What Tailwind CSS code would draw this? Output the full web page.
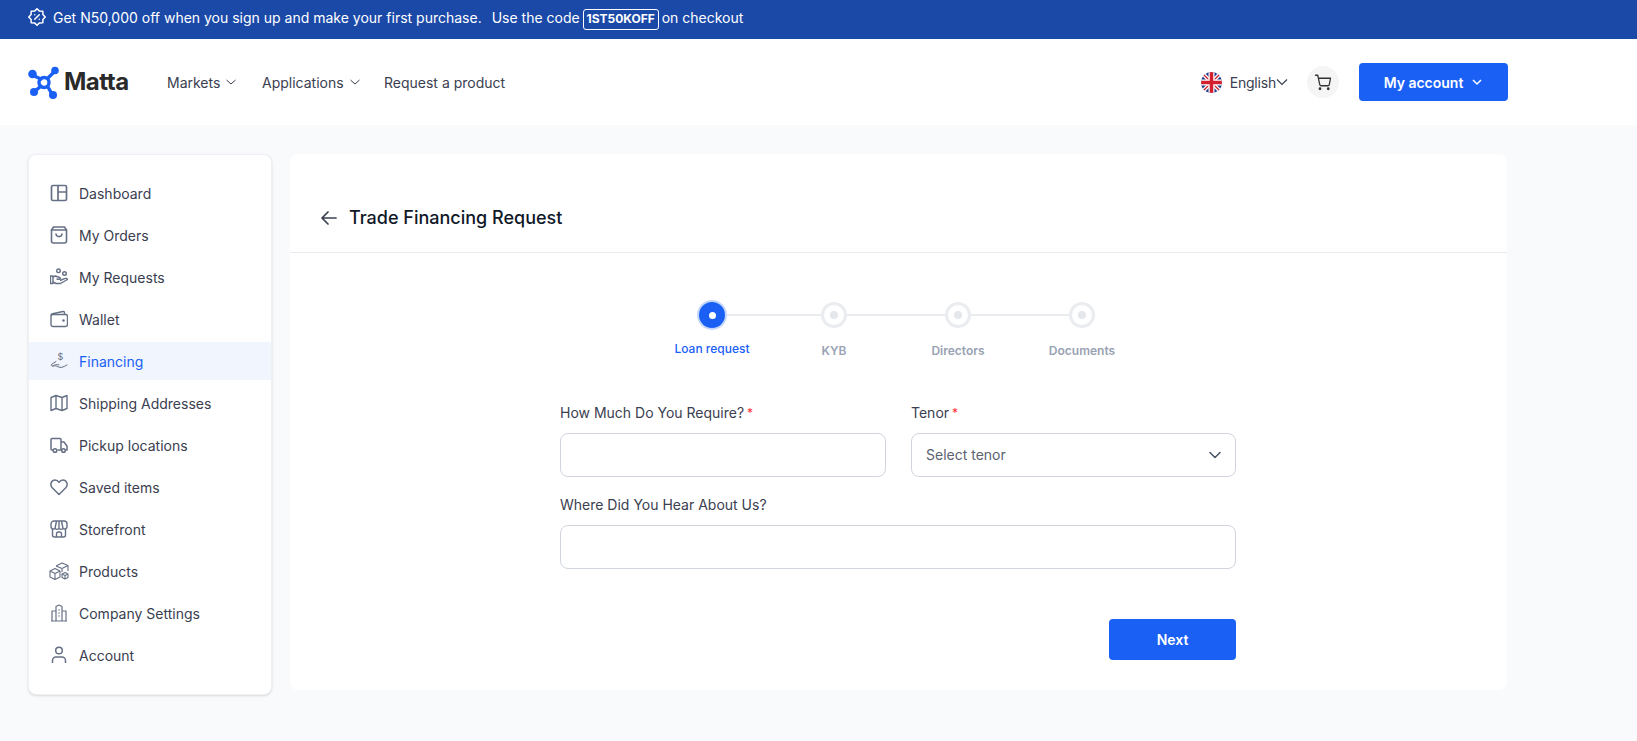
<!DOCTYPE html>
<html lang="en">
<head>
  <meta charset="UTF-8">
  <meta name="viewport" content="width=device-width, initial-scale=1.0">
  <title>Trade Financing Request</title>
  <script src="https://cdn.jsdelivr.net/npm/@tailwindcss/browser@4"></script>
</head>
<body class="bg-[#f9fafc] font-['Inter',sans-serif] text-[14px] text-[#3a4050] h-[741px] overflow-hidden">

  <!-- promo banner -->
  <div class="h-[39px] bg-[#1a49a8] text-white flex items-center pl-[28px] pb-[5px]">
    <svg class="w-[18px] h-[18px] mr-[7px]" viewBox="0 0 24 24" fill="none" stroke="currentColor" stroke-width="2" stroke-linecap="round" stroke-linejoin="round">
      <path d="M23 12 19.850 15.250 19.800 19.800 15.250 19.850 12 23 8.750 19.850 4.200 19.800 4.150 15.250 1 12 4.150 8.750 4.200 4.200 8.750 4.150 12 1 15.250 4.150 19.800 4.200 19.850 8.750Z"/>
      <path d="m15 9-6 6"/><path d="M9 9h.01"/><path d="M15 15h.01"/>
    </svg>
    <span>Get N50,000 off when you sign up and make your first purchase.</span>
    <span class="ml-[10px]">Use the code</span>
    <span class="ml-[3px] mt-[4px] h-[21px] w-[76px] border border-white rounded-[3px] text-[12px] font-bold flex items-center justify-center">1ST50KOFF</span>
    <span class="ml-[3px]">on checkout</span>
  </div>

  <!-- header -->
  <header class="h-[86px] bg-white flex items-center pl-[28px] pr-[129px]">
    <div class="flex items-center w-[139px]">
      <svg class="w-[32px] h-[34px]" viewBox="0 0 32 34" fill="none" stroke="#1a60f5">
        <path d="M4 10 L13 14 M27 6 L20 13 M6 27 L13 21 M25 31 L20 22" stroke-width="3.400" stroke-linecap="round"/>
        <circle cx="16" cy="17.500" r="5" stroke-width="3.400"/>
        <g fill="#1a60f5" stroke="none">
          <circle cx="4.500" cy="9" r="4.300"/><circle cx="27" cy="5.500" r="3.800"/><circle cx="6" cy="27" r="4"/><circle cx="25" cy="30" r="4"/>
        </g>
      </svg>
      <span class="ml-[4px] text-[24px] font-bold text-[#2a2a2a] tracking-[-0.5px]">Matta</span>
    </div>
    <nav class="flex items-center">
      <a class="flex items-center w-[95px]">Markets
        <svg class="w-[12px] h-[12px] ml-[5px]" viewBox="0 0 12 12" fill="none" stroke="currentColor" stroke-width="1"><path d="M1.500 4 6 8l4.500-4"/></svg>
      </a>
      <a class="flex items-center w-[122px]">Applications
        <svg class="w-[12px] h-[12px] ml-[5px]" viewBox="0 0 12 12" fill="none" stroke="currentColor" stroke-width="1"><path d="M1.500 4 6 8l4.500-4"/></svg>
      </a>
      <a>Request a product</a>
    </nav>
    <div class="ml-auto flex items-center">
      <svg class="w-[21px] h-[21px] rounded-full" viewBox="0 0 21 21">
        <rect width="21" height="21" fill="#1f3a8a"/>
        <path d="M0 0 21 21M21 0 0 21" stroke="#fff" stroke-width="4"/>
        <path d="M0 0 21 21M21 0 0 21" stroke="#d3202f" stroke-width="1.300"/>
        <path d="M10.500 0v21M0 10.500h21" stroke="#fff" stroke-width="6"/>
        <path d="M10.500 0v21M0 10.500h21" stroke="#d3202f" stroke-width="3.500"/>
      </svg>
      <span class="ml-[8px] tracking-[-0.2px]">English</span>
      <svg class="w-[12px] h-[12px]" viewBox="0 0 12 12" fill="none" stroke="currentColor" stroke-width="1.200"><path d="M1 3.500 6 8.500l5-5"/></svg>
      <span class="ml-[19px] w-[32px] h-[32px] rounded-full bg-[#f5f5f5] flex items-center justify-center">
        <svg class="w-[18px] h-[18px] text-[#333]" viewBox="0 0 24 24" fill="none" stroke="currentColor" stroke-width="1.700" stroke-linecap="round" stroke-linejoin="round">
          <circle cx="8" cy="21" r="1"/><circle cx="19" cy="21" r="1"/><path d="M2 3h3l2.700 12.400a2 2 0 0 0 2 1.600h8.700a2 2 0 0 0 2-1.600L22 7H6"/>
        </svg>
      </span>
      <button class="ml-[20px] w-[149px] h-[38px] rounded-[4px] bg-[#1a60f5] text-white font-semibold flex items-center justify-center">My account
        <svg class="w-[12px] h-[12px] ml-[8px]" viewBox="0 0 12 12" fill="none" stroke="currentColor" stroke-width="1.500"><path d="M2 4l4 4 4-4"/></svg>
      </button>
    </div>
  </header>

  <!-- page -->
  <main class="flex items-start pt-[29px] pl-[28px]">
    <aside class="w-[244px] h-[541px] bg-white rounded-[8px] border border-[#eef0f3] shadow-sm py-[19px] flex flex-col gap-[4px] text-[#3a4050]">
      <a class="h-[38px] flex items-center pl-[21px] gap-[11px]">
        <svg class="w-[18px] h-[18px] text-[#667085]" viewBox="0 0 18 18" fill="none" stroke="currentColor" stroke-width="1.700"><rect x="1.500" y="1.500" width="15" height="15" rx="1.500"/><path d="M8 1.500v15M8 8h8.500"/></svg>
        Dashboard</a>
      <a class="h-[38px] flex items-center pl-[21px] gap-[11px]">
        <svg class="w-[18px] h-[18px] text-[#667085]" viewBox="0 0 18 18" fill="none" stroke="currentColor" stroke-width="1.600" stroke-linecap="round"><path d="M3.500 1h11l2 3v11a2 2 0 0 1-2 2h-11a2 2 0 0 1-2-2V4z"/><path d="M1.500 4h15M6 8c.5 3.500 5.500 3.500 6 0"/></svg>
        My Orders</a>
      <a class="h-[38px] flex items-center pl-[21px] gap-[11px]">
        <svg class="w-[18px] h-[18px] text-[#667085]" viewBox="0 0 18 18" fill="none" stroke="currentColor" stroke-width="1.400" stroke-linejoin="round"><circle cx="8.500" cy="2.800" r="1.800"/><circle cx="14.500" cy="5.500" r="1.800"/><path d="M.500 8v7.500h2.500V8zM3 9l2.500-1 4 1.500c1.500.700.500 2-1 1.800l-2-.3M3 14l3 1.500h4.500l7-4c-.5-1.500-2-1.200-3-.8L10 12.500"/></svg>
        My Requests</a>
      <a class="h-[38px] flex items-center pl-[21px] gap-[11px]">
        <svg class="w-[18px] h-[18px] text-[#667085]" viewBox="0 0 18 18" fill="none" stroke="currentColor" stroke-width="1.400" stroke-linejoin="round"><path d="M1 5.500c0-1 .700-1.600 1.500-1.800L13 1.500c1-.2 1.500.5 1.500 1.500v1.500"/><rect x="1" y="4.500" width="16.500" height="12" rx="2"/><circle cx="13.500" cy="10.500" r=".6" fill="currentColor"/></svg>
        Wallet</a>
      <a class="h-[38px] flex items-center pl-[21px] gap-[11px] bg-[#f1f5fd] text-[#1a60f5]">
        <svg class="w-[18px] h-[18px] text-[#667085]" viewBox="0 0 18 18" fill="none" stroke="currentColor" stroke-width="1" stroke-linecap="round" stroke-linejoin="round"><text x="10.500" y="8" font-size="9" fill="currentColor" stroke="none" text-anchor="middle">$</text><path d="M6 9.500 2 12c-1.300 1-.8 2.300 1 2 2-.4 3-.3 5 .8 2.500 1.300 5 .6 9-1.800M3 14c1.500-1.300 3.500-1.800 6-1.200"/></svg>
        Financing</a>
      <a class="h-[38px] flex items-center pl-[21px] gap-[11px]">
        <svg class="w-[18px] h-[18px] text-[#667085]" viewBox="0 0 18 18" fill="none" stroke="currentColor" stroke-width="1.400" stroke-linejoin="round"><path d="M1 3.500 6 1.500l6 2 5-2v13l-5 2-6-2-5 2zM6 1.500v13M12 3.500v13"/></svg>
        Shipping Addresses</a>
      <a class="h-[38px] flex items-center pl-[21px] gap-[11px]">
        <svg class="w-[18px] h-[18px] text-[#667085]" viewBox="0 0 18 18" fill="none" stroke="currentColor" stroke-width="1.500" stroke-linejoin="round"><path d="M3 14H2a1 1 0 0 1-1-1V3.500a1 1 0 0 1 1-1h8a1 1 0 0 1 1 1V14H7.500M11 6h3l3 4v4h-1.500M11 14h1"/><circle cx="5" cy="14.500" r="1.800"/><circle cx="13.500" cy="14.500" r="1.800"/></svg>
        Pickup locations</a>
      <a class="h-[38px] flex items-center pl-[21px] gap-[11px]">
        <svg class="w-[18px] h-[18px] text-[#667085]" viewBox="0 0 18 18" fill="none" stroke="currentColor" stroke-width="1.500" stroke-linejoin="round"><path d="M9 16.500 2 9.500C-.5 6.500 1.500 2 5 2c2 0 3.200 1 4 2.300C9.800 3 11 2 13 2c3.500 0 5.500 4.500 3 7.500z"/></svg>
        Saved items</a>
      <a class="h-[38px] flex items-center pl-[21px] gap-[11px]">
        <svg class="w-[18px] h-[18px] text-[#667085]" viewBox="0 0 18 18" fill="none" stroke="currentColor" stroke-width="1.400" stroke-linejoin="round"><path d="M2.500 9v6a2 2 0 0 0 2 2h9a2 2 0 0 0 2-2V9"/><path d="M4 1h10a3 3 0 0 1 3 3v3a2.500 2.500 0 0 1-4 1.500 3 3 0 0 1-4 0 3 3 0 0 1-4 0A2.500 2.500 0 0 1 1 7V4a3 3 0 0 1 3-3zM6.500 1 5 8.500M11.500 1 13 8.500M9 1v8M6.500 17v-3a2 2 0 0 1 2-2h1a2 2 0 0 1 2 2v3"/></svg>
        Storefront</a>
      <a class="h-[38px] flex items-center pl-[21px] gap-[11px]">
        <svg class="w-[20px] h-[19px] -ml-[1px] mr-[-1px] text-[#667085]" viewBox="0 0 20 19" fill="none" stroke="currentColor" stroke-width="1.100" stroke-linejoin="round"><path d="M1 9l5-2.500L11 9v6l-5 2.500L1 15zM1 9l5 2.500L11 9M6 11.500v6M7 4l6-3 6 2.500v5.500M7 4l6 2.500 6-3M13 6.500V10M13 12l3-1.500 3 1.500v3.500l-3 1.500-3-1.500zM13 12l3 1.500 3-1.500M16 13.500V17"/></svg>
        Products</a>
      <a class="h-[38px] flex items-center pl-[21px] gap-[11px]">
        <svg class="w-[18px] h-[18px] text-[#667085]" viewBox="0 0 18 18" fill="none" stroke="currentColor" stroke-width="1.200" stroke-linejoin="round"><path d="M1 17h16M2 17V7h4M16 17V7h-4M6 17V2.500l3-1.500 3 1.500V17M8.200 6h1.600M8.200 9h1.600M8.200 12h1.600M4 10v.1M14 10v.1M4 13v.1M14 13v.1"/></svg>
        Company Settings</a>
      <a class="h-[38px] flex items-center pl-[21px] gap-[11px]">
        <svg class="w-[18px] h-[18px] text-[#667085]" viewBox="0 0 18 18" fill="none" stroke="currentColor" stroke-width="1.500"><circle cx="9" cy="4.500" r="3.300"/><path d="M2.500 17v-2.500a3.500 3.500 0 0 1 3.500-3.500h6a3.500 3.500 0 0 1 3.500 3.500V17"/></svg>
        Account</a>
    </aside>

    <section class="ml-[18px] w-[1217px] h-[536px] bg-white rounded-[8px]">
      <div class="h-[99px] border-b border-[#e9ebee] pt-[52px] pl-[30px] flex items-start">
        <svg class="w-[18px] h-[24px] text-[#3a4050]" viewBox="0 0 18 24" fill="none" stroke="currentColor" stroke-width="1.700" stroke-linecap="round" stroke-linejoin="round"><path d="M16 12H2M8 6l-6 6 6 6"/></svg>
        <h1 class="ml-[11px] text-[18px] leading-[24px] font-medium text-[#101828]">Trade Financing Request</h1>
      </div>

      <!-- stepper -->
      <div class="relative mt-[49px] w-[496px] h-[62px] ml-[360px]">
        <div class="absolute left-[76px] top-[12px] w-[356px] h-[2px] bg-[#eaecf0]"></div>
        <div class="relative flex w-[496px] text-[12px] font-semibold text-[#98a2b3]">
          <div class="flex flex-col items-center w-[124px] -mr-[2px]">
            <span class="w-[26px] h-[26px] rounded-full bg-[#1a60f5] ring-2 ring-[#c5d8fc] flex items-center justify-center"><span class="w-[7px] h-[7px] rounded-full bg-white"></span></span>
            <span class="mt-[13px] leading-[16px] text-[#1a60f5] font-medium">Loan request</span>
          </div>
          <div class="flex flex-col items-center w-[124px]">
            <span class="w-[26px] h-[26px] rounded-full bg-white border-[3px] border-[#eaecf0] flex items-center justify-center"><span class="w-[8px] h-[8px] rounded-full bg-[#e4e7ec]"></span></span>
            <span class="mt-[15px] leading-[16px]">KYB</span>
          </div>
          <div class="flex flex-col items-center w-[124px]">
            <span class="w-[26px] h-[26px] rounded-full bg-white border-[3px] border-[#eaecf0] flex items-center justify-center"><span class="w-[8px] h-[8px] rounded-full bg-[#e4e7ec]"></span></span>
            <span class="mt-[15px] leading-[16px]">Directors</span>
          </div>
          <div class="flex flex-col items-center w-[124px]">
            <span class="w-[26px] h-[26px] rounded-full bg-white border-[3px] border-[#eaecf0] flex items-center justify-center"><span class="w-[8px] h-[8px] rounded-full bg-[#e4e7ec]"></span></span>
            <span class="mt-[15px] leading-[16px]">Documents</span>
          </div>
        </div>
      </div>

      <!-- form -->
      <form class="ml-[270px] mt-[39px] w-[676px]">
        <div class="flex gap-[25px]">
          <div class="w-[326px]">
            <label class="block leading-[20px]">How Much Do You Require? <span class="text-red-500 text-[12px] align-top -ml-[1px]">*</span></label>
            <input type="text" class="mt-[10px] w-full h-[44px] rounded-[8px] border border-[#d0d5dd] bg-white">
          </div>
          <div class="w-[325px]">
            <label class="block leading-[20px]">Tenor <span class="text-red-500 text-[12px] align-top -ml-[1px]">*</span></label>
            <div class="mt-[10px] h-[44px] rounded-[8px] border border-[#d0d5dd] flex items-center justify-between pl-[14px] pr-[13px] pb-[1px] text-[#5b6270]">
              Select tenor
              <svg class="w-[14px] h-[14px]" viewBox="0 0 14 14" fill="none" stroke="#475467" stroke-width="1.500" stroke-linecap="round" stroke-linejoin="round"><path d="M2 4.500 7 9.500l5-5"/></svg>
            </div>
          </div>
        </div>
        <div class="mt-[18px]">
          <label class="block leading-[20px]">Where Did You Hear About Us?</label>
          <input type="text" class="mt-[10px] w-full h-[44px] rounded-[8px] border border-[#d0d5dd] bg-white">
        </div>
        <div class="mt-[50px] flex justify-end">
          <button type="button" class="w-[127px] h-[41px] rounded-[4px] bg-[#1a60f5] text-white font-semibold">Next</button>
        </div>
      </form>
    </section>
  </main>

</body>
</html>
